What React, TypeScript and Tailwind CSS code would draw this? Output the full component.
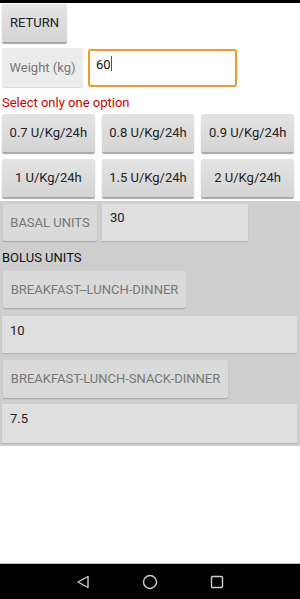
import React from "react";

const btn =
  "flex items-center justify-center rounded-[2px] bg-gradient-to-b from-[#e4e4e4] to-[#d4d4d4] shadow-[0_1.5px_1px_rgba(0,0,0,0.35)] text-[13px] text-[#222]";

export default function App() {
  const rates = ["0.7 U/Kg/24h", "0.8 U/Kg/24h", "0.9 U/Kg/24h", "1 U/Kg/24h", "1.5 U/Kg/24h", "2 U/Kg/24h"];
  return (
    <div
      className="w-[300px] h-[599px] bg-white flex flex-col overflow-hidden"
      style={{ fontFamily: "Roboto, 'Noto Sans', sans-serif" }}
    >
      <div className="h-[3px] bg-black shrink-0" />
      <div className="flex flex-col">
        <div className={`${btn} ml-[2px] mt-[1px] w-[65px] h-[38px]`}>RETURN</div>
        <div className="flex mt-[6px] ml-[2px] items-start">
          <div className="w-[81px] h-[39px] bg-[#ececec] rounded-[2px] shadow-[0_1px_1px_rgba(0,0,0,0.15)] flex items-center justify-center text-[13px] text-[#777]">
            Weight (kg)
          </div>
          <div className="ml-[5px] mt-[1px] w-[149px] h-[38px] border-2 border-[#ef9a2a] rounded-[3px] px-[6px] pt-[4px] text-[13px] text-[#111] flex items-start">
            <span>60</span>
            <span className="w-[1px] h-[15px] bg-[#555] mt-[1px]" />
          </div>
        </div>
        <div className="mt-[8px] ml-[2px] text-[13px] leading-[16px] text-[#d00000]">Select only one option</div>
        <div className="grid grid-cols-3 gap-x-[7px] gap-y-[7px] mt-[3px] ml-[2px] w-[292px]">
          {rates.map((r) => (
            <div key={r} className={`${btn} h-[38px] text-[13.4px]`}>
              {r}
            </div>
          ))}
        </div>
      </div>
      <div className="mt-[4px] h-[245px] bg-[#cecece] flex flex-col px-[2px] pt-[3px]">
        <div className="flex items-start">
          <div className="ml-[1px] w-[94px] h-[37px] bg-[#dadada] rounded-[2px] shadow-[0_1px_1px_rgba(0,0,0,0.2)] flex items-center justify-center text-[13px] text-[#777]">
            BASAL UNITS
          </div>
          <div className="ml-[5px] w-[146px] h-[37px] bg-[#dfdfdf] px-[8px] pt-[4px] text-[13px] text-[#222] shadow-[0_1px_1px_rgba(0,0,0,0.12)]">
            30
          </div>
        </div>
        <div className="mt-[9px] text-[13px] leading-[16px] text-[#111]">BOLUS UNITS</div>
        <div className="mt-[5px] ml-[1px] w-[183px] h-[37px] bg-[#dadada] rounded-[2px] shadow-[0_1px_1px_rgba(0,0,0,0.2)] flex items-center justify-center text-[13px] text-[#777] whitespace-nowrap">
          BREAKFAST--LUNCH-DINNER
        </div>
        <div className="mt-[8px] w-[295px] h-[37px] bg-[#dfdfdf] px-[8px] pt-[5px] text-[13px] text-[#222] shadow-[0_1px_1px_rgba(0,0,0,0.12)]">
          10
        </div>
        <div className="mt-[7px] ml-[1px] w-[225px] h-[38px] bg-[#dadada] rounded-[2px] shadow-[0_1px_1px_rgba(0,0,0,0.2)] flex items-center justify-center text-[13px] text-[#777] whitespace-nowrap">
          BREAKFAST-LUNCH-SNACK-DINNER
        </div>
        <div className="mt-[6px] w-[295px] h-[39px] bg-[#dfdfdf] px-[8px] pt-[5px] text-[13px] text-[#222] shadow-[0_1px_1px_rgba(0,0,0,0.12)]">
          7.5
        </div>
      </div>
      <div className="flex-1" />
      <div className="h-[36px] bg-black border-t border-[#bbb] flex items-center justify-center gap-[52px] shrink-0">
        <svg width="14" height="14" viewBox="0 0 14 14">
          <path d="M12 1.5 L2 7 L12 12.5 Z" fill="none" stroke="#cfcfcf" strokeWidth="1.4" strokeLinejoin="round" />
        </svg>
        <svg width="16" height="16" viewBox="0 0 16 16">
          <circle cx="8" cy="8" r="6.5" fill="none" stroke="#cfcfcf" strokeWidth="1.4" />
        </svg>
        <svg width="14" height="14" viewBox="0 0 14 14">
          <rect x="1.5" y="1.5" width="11" height="11" rx="1" fill="none" stroke="#cfcfcf" strokeWidth="1.4" />
        </svg>
      </div>
    </div>
  );
}
